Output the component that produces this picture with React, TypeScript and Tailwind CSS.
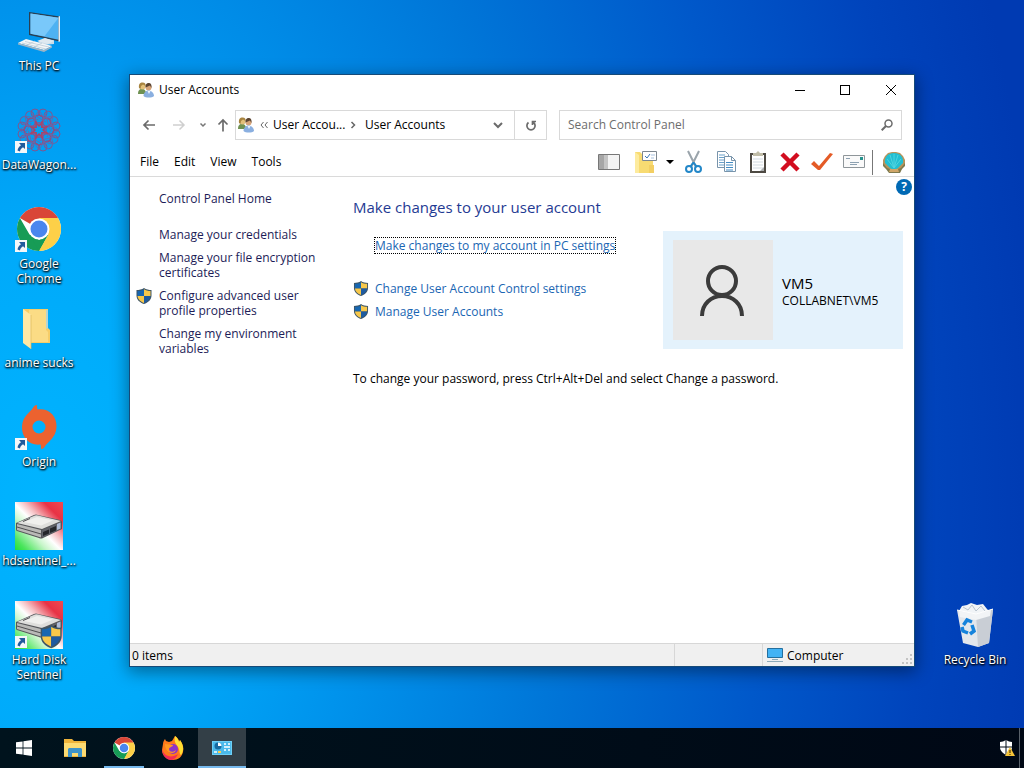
import React, { useId } from 'react';

interface IconProps {
  className?: string;
}

const ThisPcIcon = ({ className }: IconProps) => (
  <svg viewBox="0 0 48 48" className={className}>
    <path d="M30 31l9 2v4l-10 1-6-3z" fill="#c9dbe8" />
    <path d="M14 5l31 4.500v25L14 28z" fill="#2a3f52" />
    <path d="M15.500 6.500l28 4.200v22L15.500 26.700z" fill="#4fb2f2" />
    <path d="M15.500 6.500l28 4.200-14 18.500-14-2.500z" fill="#79c8fa" />
    <path d="M43.500 9.500l1.500-.5v25.500l-1.500.5z" fill="#e8eef2" />
    <path d="M22 34l8-3 9 3-6 3z" fill="#dfe9f0" />
    <path d="M3 36l8-4 26 7-8 4z" fill="#f3f6f8" />
    <path d="M3 36l26 7 8-4v1.500L29 45 3 37.500z" fill="#9db4c4" />
    <path d="M7 36l24 6M10 34.500l24 5.500M12 38l8-4M19 40l8-4" stroke="#b4c5d1" strokeWidth=".7" />
  </svg>
);

const DataWagonIcon = ({ className }: IconProps) => (
  <svg viewBox="0 0 48 48" className={className} fill="none" stroke="#80568f">
    {[0, 45, 90, 135, 180, 225, 270, 315].map((angle) => (
      <g key={angle} transform={`rotate(${angle} 24 24)`}>
        <circle cx="20" cy="7" r="4" strokeWidth="1" />
        <circle cx="28" cy="7" r="4" strokeWidth="1" />
        <circle cx="24" cy="13" r="4" stroke="#97497c" strokeWidth="1.200" />
        <path d="M24 4l5 8-5 7-5-7zM17 8l14 8" stroke="#6a66a8" strokeWidth=".9" />
        <path d="M20 16l4 4 4-4" stroke="#a94469" strokeWidth="1.500" />
      </g>
    ))}
  </svg>
);

const ChromeIcon = ({ className }: IconProps) => (
  <svg viewBox="0 0 48 48" className={className}>
    <circle cx="24" cy="24" r="22" fill="#fff" />
    <path d="M24 24L4.950 13A22 22 0 0 1 43.050 13z" fill="#d94637" />
    <path d="M24 13h19.050A22 22 0 0 1 24 46l9.500-16.500z" fill="#fdd048" />
    <path d="M24 46A22 22 0 0 1 4.950 13l9.550 16.500L24 35l5 2z" fill="#179c56" />
    <path d="M24 46l9.500-16.500-9.500 5.500-9.500-5.500z" fill="#179c56" />
    <path d="M24 46l9.500-16.500L36 24l5 12z" fill="#fdd048" />
    <circle cx="24" cy="24" r="10.500" fill="#fff" />
    <circle cx="24" cy="24" r="8.500" fill="#4a86ee" />
  </svg>
);

const FolderIcon = ({ className }: IconProps) => (
  <svg viewBox="0 0 48 48" className={className}>
    <path d="M8 5h25v19l2 2v13H12z" fill="#f6cd68" />
    <path d="M14 6h17v20l2 2v10H14z" fill="#fbdc85" />
    <path d="M31 6h2v18l-2 1z" fill="#b8d5d0" />
    <path d="M8 5l8 6v34l-8-6z" fill="#ffe9a6" />
    <path d="M16 11v34" stroke="#ddb95d" strokeWidth=".7" />
  </svg>
);

const OriginIcon = ({ className }: IconProps) => (
  <svg viewBox="0 0 48 48" className={className}>
    <path
      fill="#ec622f"
      fillRule="evenodd"
      d="M22 2c0 2 0 3 .5 4.500C34 5 42 13 41.500 24 41 35 33 38 29.500 44c-.7 1.200-2 2-3.500 2 0-2 0-3-.5-4.500C14 43 6.500 34 7 23.500 7.500 13 15 10 18.500 4c.8-1.200 2-2 3.500-2zM24 17.500a6.500 6.500 0 1 0 0 13 6.500 6.500 0 0 0 0-13z"
    />
  </svg>
);

const DiskIcon = ({ className, shield = false }: IconProps & { shield?: boolean }) => {
  const id = useId();
  return (
    <svg viewBox="0 0 48 48" className={className}>
      <defs>
        <linearGradient id={id} x1="0" y1="1" x2="1" y2="0">
          <stop offset="0" stopColor="#1fe03a" />
          <stop offset=".12" stopColor="#4be55d" />
          <stop offset=".34" stopColor="#c9f6cb" />
          <stop offset=".48" stopColor="#fff" />
          <stop offset=".6" stopColor="#f5bcc0" />
          <stop offset=".8" stopColor="#e83245" />
          <stop offset="1" stopColor="#f04a50" />
        </linearGradient>
      </defs>
      <path d="M0 0h48v48H0z" fill={`url(#${id})`} />
      <path d="M1 21l18-8q2-1 4 0l22 5q2 .500 2 2v7L28 36q-2 1-4 0L2 29q-1 0-1-2z" fill="#55565a" />
      <path d="M2 21l18-7.500q1-.5 3 0L46 19l-19 8z" fill="#dededc" />
      <path d="M9 20l13-5 16 3.500-12 5z" fill="#f0f0ee" />
      <path d="M2 22l24 6v7.500L2 28z" fill="#b9b9b7" />
      <path d="M27 28l19-8v7l-19 8.500z" fill="#606269" />
      <path d="M28 30l6-2.500v4L28 34zM35 26.500l6-2.500v4.500L35 31z" fill="#24262b" />
      <path d="M42 22l3.500-1.500v6L42 28z" fill="#aebbd7" />
      <path d="M8 19.500l7-3M2 25l24 7" stroke="#4f4f51" />
      {shield && (
        <g transform="translate(25 24) scale(1.400 1.450)">
          <ShieldShape />
        </g>
      )}
    </svg>
  );
};

const ShieldShape = () => (
  <>
    <path d="M8 0c2 1.500 5 2 7.500 2v5.500C15.500 12 12 14.500 8 16 4 14.500.5 12 .5 7.500V2C3 2 6 1.500 8 0z" fill="#3d5566" />
    <path d="M8 1.200V8H1.500V3C4 3 6.200 2.400 8 1.200z" fill="#1867b1" />
    <path d="M8 1.200V8h6.500V3C12 3 9.800 2.400 8 1.200z" fill="#f8c84a" />
    <path d="M1.500 8H8v7C4.500 13.500 1.800 11.500 1.500 8z" fill="#f8c84a" />
    <path d="M14.500 8H8v7c3.500-1.500 6.200-3.500 6.500-7z" fill="#1e5ba0" />
  </>
);

const ShieldIcon = ({ className }: IconProps) => (
  <svg viewBox="0 0 16 16" className={className}>
    <ShieldShape />
  </svg>
);

const RecycleBinIcon = ({ className }: IconProps) => (
  <svg viewBox="0 0 48 48" className={className}>
    <path d="M8 10l3-5 5-1 4-2 6 2 6-1 4 5 3 3-8 8H14z" fill="#f1f4f7" />
    <path d="M12 6l5 3 4-5 4 6 5-5 4 5" stroke="#b9c4ce" fill="none" />
    <path d="M6 9l19 4 17-5-4 34-11 4-15-4z" fill="#e3e7ec" />
    <path d="M25 13l17-5-4 34-11 4z" fill="#c9ced5" />
    <path d="M8 10l16 3 16-4-1 6-14 4-16-3z" fill="#f2f4f6" />
    <path d="M6 9l19 4 17-5" stroke="#fff" fill="none" />
    <g fill="none" stroke="#1583dc" strokeWidth="3.500">
      <path d="M12.500 24l3.500-5 5 2" />
      <path d="M21 24l2 6-4 3" />
      <path d="M17 32l-5-2-1-4" />
    </g>
  </svg>
);

const UsersIcon = ({ className }: IconProps) => (
  <svg viewBox="0 0 16 16" className={className}>
    <path d="M0 12c0-3 1-5 4-5s4 2 4 5z" fill="#6f9152" />
    <circle cx="4.500" cy="4.500" r="3" fill="#e2c07a" />
    <path d="M1 6C.5 2 2 .500 4.500.500S8 2 7.500 4L5 2.500 3 4 2.500 7z" fill="#a88440" />
    <circle cx="10.500" cy="5.500" r="3" fill="#d5a379" />
    <path d="M7.500 5.500c-.3-3 1-4.500 3-4.500s3.400 1 3 5L12 3.500z" fill="#5b4430" />
    <path d="M5.500 14c0-3 2-5.500 5-5.500s5.500 2.500 5.500 5.500c-2 2-8.500 2-10.500 0z" fill="#8aafe0" />
    <path d="M9.500 9l1.500 3 1.500-3z" fill="#eef5fc" />
  </svg>
);

const ShortcutArrow = () => (
  <svg viewBox="0 0 12 12" className="absolute bottom-px left-0 size-3">
    <path d="M0 0h12v12H0z" fill="#f5f7f9" />
    <path d="M4 2h6v6L8 6.200C6 7.500 5.200 8.500 5 10.500L2.500 9.500C3 7 4 5.500 6 4.200z" fill="#225a9c" />
  </svg>
);

interface DesktopItemProps {
  label: string;
  shortcut?: boolean;
  children: React.ReactNode;
}

const DesktopItem: React.FC<DesktopItemProps> = ({ label, shortcut = false, children }) => (
  <button className="flex h-[99px] w-[76px] flex-col items-center pt-[7px]">
    <span className="relative size-12 shrink-0">
      {children}
      {shortcut && <ShortcutArrow />}
    </span>
    <span className="mt-[3px] text-xs leading-[15px] text-white [text-shadow:1px_1px_2px_#000,0_1px_2px_#000]">{label}</span>
  </button>
);

const TitleBar = () => (
  <header className="flex h-[30px] shrink-0 items-center pl-2">
    <UsersIcon className="size-4" />
    <h1 className="ml-[5px] flex-1">User Accounts</h1>
    <button aria-label="Minimize" className="grid h-[30px] w-[45px] place-items-center">
      <svg viewBox="0 0 10 10" className="size-[10px]" shapeRendering="crispEdges"><path d="M0 5.500h10" stroke="#000" /></svg>
    </button>
    <button aria-label="Maximize" className="grid h-[30px] w-[46px] place-items-center">
      <svg viewBox="0 0 10 10" className="size-[10px]" shapeRendering="crispEdges"><path d="M.5.5h9v9h-9z" stroke="#000" fill="none" /></svg>
    </button>
    <button aria-label="Close" className="grid h-[30px] w-[46px] place-items-center">
      <svg viewBox="0 0 10 10" className="size-[10px]"><path d="M0 0l10 10M10 0L0 10" stroke="#000" /></svg>
    </button>
  </header>
);

const AddressRow = () => (
  <div className="flex h-10 shrink-0 items-center pr-3 pl-[11px]">
    <button aria-label="Back" className="w-4">
      <svg viewBox="0 0 16 16" className="size-4" fill="none" stroke="#6b6b6b" strokeWidth="1.700"><path d="M14 8H3M7.500 3.500L3 8l4.500 4.500" /></svg>
    </button>
    <button aria-label="Forward" className="ml-[14px] w-4">
      <svg viewBox="0 0 16 16" className="size-4" fill="none" stroke="#cfcfcf" strokeWidth="1.500"><path d="M2 8h11M8.500 3.500L13 8l-4.500 4.500" /></svg>
    </button>
    <button aria-label="Recent locations" className="ml-3 w-2">
      <svg viewBox="0 0 8 8" className="size-2" fill="none" stroke="#777" strokeWidth="1.500"><path d="M1.500 2.500L4 5l2.500-2.500" /></svg>
    </button>
    <button aria-label="Up" className="ml-2 w-4">
      <svg viewBox="0 0 16 16" className="size-4" fill="none" stroke="#6b6b6b" strokeWidth="1.700"><path d="M8 14.500V3M3.500 7.500L8 3l4.500 4.500" /></svg>
    </button>
    <div className="ml-1 flex h-[30px] w-[312px] items-center border border-[#d9d9d9] pl-0.5">
      <UsersIcon className="size-4" />
      <svg viewBox="0 0 8 8" className="ml-[6px] size-2" fill="none" stroke="#666"><path d="M3.500 1L1 4l2.500 3M7.500 1L5 4l2.500 3" /></svg>
      <button className="ml-[5px] w-[70px] text-left whitespace-nowrap">User Accou...</button>
      <svg viewBox="0 0 8 8" className="ml-[6px] size-2" fill="none" stroke="#666" strokeWidth="1.500"><path d="M2.500 1l3 3-3 3" /></svg>
      <button className="ml-2 flex-1 text-left">User Accounts</button>
      <button aria-label="Previous locations" className="grid w-8 place-items-center">
        <svg viewBox="0 0 10 10" className="size-[10px]" fill="none" stroke="#6b6b6b" strokeWidth="2"><path d="M1 3l4 4 4-4" /></svg>
      </button>
      <button aria-label="Refresh" className="grid h-full w-8 place-items-center border-l border-[#d9d9d9]">
        <svg viewBox="0 0 12 12" className="size-3" fill="none" stroke="#6b6b6b" strokeWidth="1.700"><path d="M3.500 3.500A4.100 4.100 0 1 0 8.500 3.500M7.500 6V2.500M6.700 2.500H11" /></svg>
      </button>
    </div>
    <label className="ml-3 flex h-[30px] flex-1 items-center border border-[#d9d9d9] px-2">
      <input aria-label="Search Control Panel" placeholder="Search Control Panel" className="min-w-0 flex-1 outline-none placeholder:text-[#6d6d6d]" />
      <svg viewBox="0 0 12 12" className="size-3" fill="none" stroke="#6b6b6b"><circle cx="7.500" cy="4.500" r="3.500" strokeWidth="1.500" /><path d="M5 7L.7 11.300" strokeWidth="2" /></svg>
    </label>
  </div>
);

const ToolButton = ({ label, children }: { label: string; children: React.ReactNode }) => (
  <button aria-label={label} className="grid w-8 place-items-center">
    <svg viewBox="0 0 24 24" className="size-6" fill="none">{children}</svg>
  </button>
);

const MenuRow = () => (
  <div className="flex h-8 shrink-0 items-center border-b border-[#dadada] pt-[3px] pr-1 pl-[10px]">
    <nav className="flex flex-1 gap-[15px]">
      <button>File</button>
      <button>Edit</button>
      <button>View</button>
      <button>Tools</button>
    </nav>
    <ToolButton label="Preview pane">
      <path d="M1.500 4.500h21v15h-21z" fill="#f4f4f4" stroke="#777" />
      <path d="M2 5h9v14H2z" fill="#a6a6a6" />
      <path d="M7 5h4v14H7z" fill="#c4c4c4" />
    </ToolButton>
    <div className="ml-[5px] flex">
      <ToolButton label="Folder options">
        <path d="M1 2h5l2 2h11v19H1z" fill="#f8db72" />
        <path d="M1 2l4 3v18H1z" fill="#fdeb9e" />
        <path d="M15 15h5v8h-5z" fill="#f3cf63" />
        <path d="M8.500 1.500h14v9h-14z" fill="#fff" stroke="#7e8790" />
        <path d="M11 6l2 2 3-4" stroke="#3976b8" />
        <path d="M17 5h4M17 8h3" stroke="#a9c2df" />
      </ToolButton>
    </div>
    <button aria-label="More folder options" className="grid w-4 place-items-center">
      <svg viewBox="0 0 8 4" className="h-1 w-2"><path d="M0 0h8L4 4z" fill="#000" /></svg>
    </button>
    <ToolButton label="Cut">
      <path d="M6 1l8 16M17 1L9 17" stroke="#9aa4ab" strokeWidth="2" />
      <path d="M11.500 12.500L8 17M11.500 12.500L15 17" stroke="#2387c8" strokeWidth="2" />
      <circle cx="7" cy="19" r="3" stroke="#2387c8" strokeWidth="2" />
      <circle cx="16" cy="19" r="3" stroke="#2387c8" strokeWidth="2" />
    </ToolButton>
    <ToolButton label="Copy">
      <path d="M3.500 1.500h8l3 3v13h-11z" fill="#fff" stroke="#7894ab" />
      <path d="M5 5h6M5 7.500h7M5 10h7M5 12.500h5M5 15h5" stroke="#69a0ca" />
      <path d="M10.500 6.500h7l4 4v11h-11z" fill="#fff" stroke="#7894ab" />
      <path d="M17.500 6.500v4h4" stroke="#7894ab" />
      <path d="M12 12.500h7M12 15h7M12 17.500h7M12 20h7" stroke="#438bc3" />
    </ToolButton>
    <ToolButton label="Paste">
      <path d="M4 3h16v20H4z" fill="#4e4a43" />
      <path d="M6 5h12v16H6z" fill="#fff" />
      <path d="M7 6V3h3l2-2 2 2h3v3z" fill="#c1bda8" />
      <path d="M7 9h10M7 12h10M7 15h10M7 18h10" stroke="#d3dbe1" />
      <path d="M14 21l4-4v4z" fill="#a9acad" />
    </ToolButton>
    <ToolButton label="Delete">
      <path d="M4 4l16 16M20 4L4 20" stroke="#d20d1f" strokeWidth="4.500" />
    </ToolButton>
    <ToolButton label="Properties">
      <path d="M1 14l3-3 5 5L20 3l3 1L10 20H8z" fill="#e45b26" />
    </ToolButton>
    <ToolButton label="E-mail">
      <path d="M1.500 5.500h21v12h-21z" fill="#fafafa" stroke="#8f969a" />
      <path d="M4 8.500h4M8 12.500h9M8 14.500h7" stroke="#8da1b1" />
      <path d="M18 7h3v3h-3z" fill="#27948f" />
    </ToolButton>
    <span className="ml-0.5 h-[25px] w-px bg-[#777]" />
    <div className="ml-[5px] flex">
      <ToolButton label="Classic shell settings">
        <path d="M3 6L6 3l4-1h4l4 1 3 3 2 4v5l-3 3-2 4H7l-3-4-3-3v-5z" fill="#b8935a" />
        <path d="M3 13c-1-6 3-10 9-10s10 4 9 10l-4 4c-2 3-8 3-10 0z" fill="#22bfd2" />
        <path d="M12 18L5 9M12 18L8 5M12 18V4M12 18l4-13M12 18l7-9" stroke="#4fd3df" />
        <path d="M1 13l4 5 3 1h8l3-1 4-5v3l-3 3-2 4H7l-3-4-3-3z" fill="#7e7a4e" />
        <path d="M8 19h8l1 3H7z" fill="#d0a668" />
      </ToolButton>
    </div>
  </div>
);

const Sidebar = () => (
  <aside className="flex w-[223px] shrink-0 flex-col items-start gap-2 pt-[14px] pr-6 pl-[29px] leading-[15px] text-[#1c1c57]">
    <a href="#home" className="mb-[13px]">Control Panel Home</a>
    <a href="#credentials">Manage your credentials</a>
    <a href="#certificates">Manage your file encryption certificates</a>
    <a href="#profile" className="relative">
      <ShieldIcon className="absolute top-0 -left-[23px] size-4" />
      Configure advanced user profile properties
    </a>
    <a href="#environment">Change my environment variables</a>
  </aside>
);

const Content = () => (
  <main className="relative flex-1 pt-5 pr-[11px]">
    <button aria-label="Help" className="absolute top-0.5 right-0.5 grid size-4 place-items-center rounded-full bg-[#0069b4] font-bold text-white">?</button>
    <h2 className="text-[15px] leading-5 text-[#1f3a93]">Make changes to your user account</h2>
    <div className="mt-[14px] flex items-start justify-between">
      <div className="flex flex-col items-start gap-2 pt-[7px] leading-[15px] text-[#1a66b3]">
        <a href="#settings" className="mb-5 ml-[22px] outline-1 outline-dotted outline-black">Make changes to my account in PC settings</a>
        <a href="#uac" className="flex gap-[6px]">
          <ShieldIcon className="h-[15px] w-4" />
          Change User Account Control settings
        </a>
        <a href="#manage" className="flex gap-[6px]">
          <ShieldIcon className="h-[15px] w-4" />
          Manage User Accounts
        </a>
      </div>
      <section className="flex h-[118px] w-60 shrink-0 items-center gap-[9px] bg-[#e4f2fc] pl-[10px] text-black">
        <svg viewBox="0 0 100 100" className="size-[100px] bg-[#e8e8e8]" fill="none" stroke="#3b3b3b" strokeWidth="4">
          <circle cx="49" cy="41" r="14" />
          <path d="M29 76c0-12 9-20 20-20s20 8 20 20" />
        </svg>
        <div>
          <p className="text-[15px] leading-5">VM5</p>
          <p className="leading-[15px]">COLLABNET\VM5</p>
        </div>
      </section>
    </div>
    <p className="mt-[22px] leading-[15px]">To change your password, press Ctrl+Alt+Del and select Change a password.</p>
  </main>
);

const StatusBar = () => (
  <footer className="flex h-[23px] shrink-0 border-t border-[#d7d7d7] bg-[#f0f0f0] leading-[23px]">
    <span className="flex-1 pl-0.5">0 items</span>
    <span className="w-[88px] border-l border-[#d7d7d7]" />
    <span className="flex w-[152px] items-center border-l border-[#d7d7d7] pl-1">
      <svg viewBox="0 0 16 16" className="size-4"><path d="M.5 1.500h15v9H.5z" fill="#42b3f5" stroke="#246f9e" /><path d="M5 12.500h6M0 14.500h16" stroke="#8daab9" /></svg>
      <span className="ml-1 flex-1">Computer</span>
      <svg viewBox="0 0 10 10" className="mt-2 mr-0.5 size-[10px]"><path d="M8 0h2v2H8zM8 4h2v2H8zM8 8h2v2H8zM4 4h2v2H4zM4 8h2v2H4zM0 8h2v2H0z" fill="#c4c4c4" /></svg>
    </span>
  </footer>
);

const Taskbar = () => (
  <footer className="flex h-10 shrink-0 bg-linear-to-r from-[#00131d] to-[#000815]">
    <button aria-label="Start" className="mr-[3px] grid w-12 place-items-center">
      <svg viewBox="0 0 16 16" className="size-4" fill="#fff"><path d="M0 2.300l6.600-.9v6.200H0zM7.400 1.300L16 0v7.600H7.400zM0 8.400h6.600v6.200L0 13.700zM7.400 8.400H16V16l-8.600-1.300z" /></svg>
    </button>
    <div className="flex flex-1 gap-px">
      <button aria-label="File Explorer" className="grid w-12 place-items-center">
        <svg viewBox="0 0 22 20" className="h-5 w-[22px]"><path d="M0 1h8l2 2h12v16H0z" fill="#efb43b" /><path d="M0 5h22v13H0z" fill="#fddb72" /><path d="M4 19v-8l1-1h12l1 1v8h-4v-4H8v4z" fill="#3e93c9" /></svg>
      </button>
      <button aria-label="Google Chrome" className="grid w-12 place-items-center bg-[linear-gradient(#76b9ed,#76b9ed)] bg-[length:40px_2px] bg-[position:bottom_center] bg-no-repeat">
        <ChromeIcon className="size-6" />
      </button>
      <button aria-label="Firefox" className="grid w-12 place-items-center">
        <svg viewBox="0 0 24 24" className="size-6">
          <path d="M2 8c0-2 1-4 2-5l1 2 3 1 3-1 3-5c3 2 4 4 4 6l1-2c3 4 4 8 3 12-1 5-5 8-10 8C6 24 1 20 1 14z" fill="#ff7a1b" />
          <path d="M14 0c4 3 4 6 4 6l1-2c4 6 4 11 1 15-2-1-1-5-3-8-3-4-4-6-3-11z" fill="#ffdf32" />
          <path d="M1 12c1 8 9 11 16 6-2 4-4 6-8 6-5-1-8-6-8-12z" fill="#f42b58" />
          <circle cx="12" cy="13" r="5" fill="#8d34c7" />
          <path d="M4 8l8 1c0 2-4 2-4 4 0 3 4 4 7 1-1 5-11 4-11-6z" fill="#ff9921" />
        </svg>
      </button>
      <button aria-label="User Accounts" className="grid w-12 place-items-center border-b-2 border-[#76b9ed] bg-[#333f47]">
        <svg viewBox="0 0 20 16" className="mt-0.5 h-4 w-5"><path d="M0 1h20v14H0z" fill="#6fd0f6" /><path d="M1 2h18v12H1z" fill="#4ab9ea" /><circle cx="6" cy="6" r="3.500" fill="#176a9f" /><path d="M6 6V2.500A3.500 3.500 0 0 1 9.500 6z" fill="#fff" /><path d="M12 4h2M16 4h2M12 7h6M12 10h2M16 10h2M2 12h3" stroke="#fff" strokeWidth="1.500" /><path d="M6 12h3" stroke="#ffd14b" strokeWidth="2" /></svg>
      </button>
    </div>
    <button aria-label="Security warning" className="mr-0.5 grid w-5 place-items-center">
      <svg viewBox="0 0 16 16" className="size-4"><path d="M7 0c2 1 4 2 6 2v5c0 4-3 6-6 8-3-2-6-4-6-8V2c2 0 4-1 6-2z" fill="#fff" /><path d="M7 0v15M1 7h12" stroke="#000b16" /><path d="M11 7l5 9H6z" fill="#f5c338" /><path d="M11 10v3M11 14v1" stroke="#2b1d00" /></svg>
    </button>
    <button aria-label="Show desktop" className="w-[5px] border-l border-[#59616a]" />
  </footer>
);

export default function App() {
  return (
    <div className="flex h-screen flex-col overflow-hidden bg-[radial-gradient(ellipse_98%_200%_at_4%_65%,#00b4ff_0%,#00aafa_16%,#0093ec_32%,#0076d8_52%,#0058ca_72%,#0044bc_88%,#003ab2_100%)] font-['Open_Sans','Noto_Sans',sans-serif] text-xs">
      <div className="relative flex flex-1 items-end justify-between">
        <div className="flex flex-col self-start pl-px">
          <DesktopItem label="This PC"><ThisPcIcon className="size-12" /></DesktopItem>
          <DesktopItem label="DataWagon..." shortcut><DataWagonIcon className="size-12" /></DesktopItem>
          <DesktopItem label="Google Chrome" shortcut><ChromeIcon className="size-12" /></DesktopItem>
          <DesktopItem label="anime sucks"><FolderIcon className="size-12" /></DesktopItem>
          <DesktopItem label="Origin" shortcut><OriginIcon className="size-12" /></DesktopItem>
          <DesktopItem label="hdsentinel_..."><DiskIcon className="size-12" /></DesktopItem>
          <DesktopItem label="Hard Disk Sentinel" shortcut><DiskIcon className="size-12" shield /></DesktopItem>
        </div>
        <div className="mr-[11px] mb-[35px]">
          <DesktopItem label="Recycle Bin"><RecycleBinIcon className="size-12" /></DesktopItem>
        </div>

        <div className="absolute top-[75px] left-[130px] flex h-[591px] w-[784px] flex-col bg-white shadow-[0_0_0_1px_#164a78,0_4px_16px_2px_rgba(0,0,0,0.4)]">
          <TitleBar />
          <AddressRow />
          <MenuRow />
          <div className="flex flex-1">
            <Sidebar />
            <Content />
          </div>
          <StatusBar />
        </div>
      </div>
      <Taskbar />
    </div>
  );
}
